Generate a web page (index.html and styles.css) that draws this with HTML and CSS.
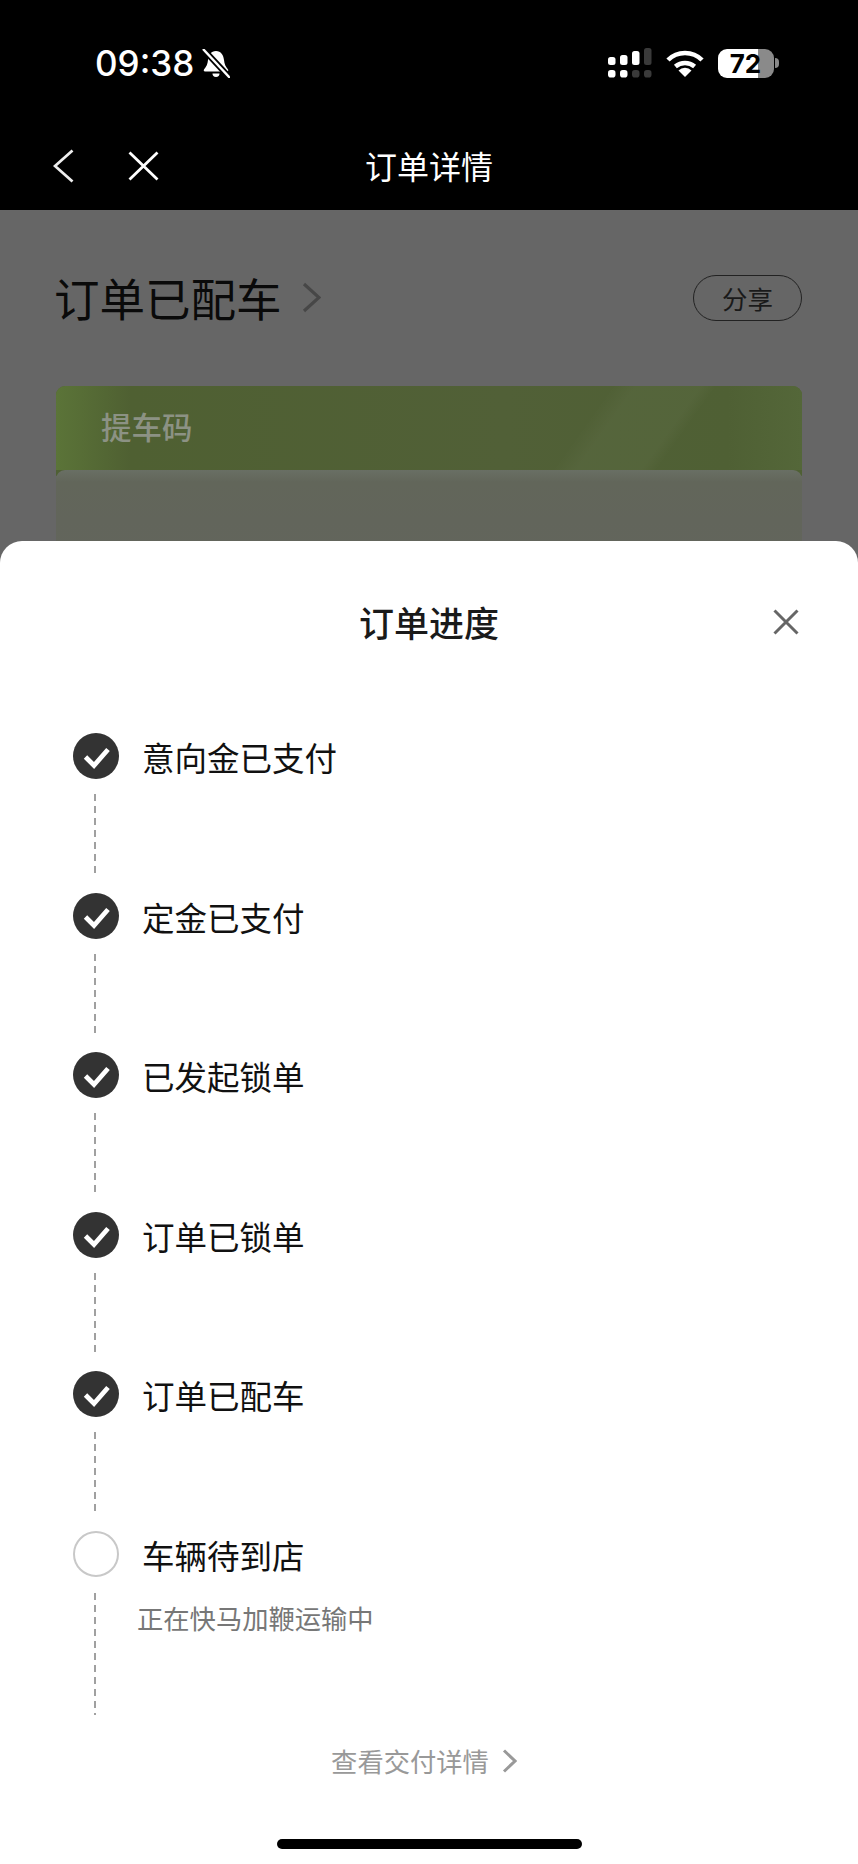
FILE: index.html
```html
<!DOCTYPE html>
<html lang="zh-CN">
<head>
<meta charset="utf-8">
<title>订单进度</title>
<link rel="stylesheet" href="styles.css">
</head>
<body>
<div class="page">
  <header class="top">
    <div class="status">
      <div class="status-left">
        <span class="time">09:38</span>
        <svg class="bell" viewBox="0 0 28 29"><path d="M14 2c5 0 7.500 4 8 9 .4 4 1.500 6.500 4 9.500.6 1 0 2-1 2H3c-1 0-1.600-1-1-2 2.500-3 3.600-5.500 4-9.500.5-5 3-9 8-9z" fill="#fff"/><path d="M10.500 24.500h7a3.500 3.500 0 0 1-7 0z" fill="#fff"/><path d="M1 0l27 29" stroke="#000" stroke-width="6"/><path d="M1 0l27 29" stroke="#fff" stroke-width="2.400"/></svg>
      </div>
      <div class="status-right">
        <svg class="signal" viewBox="0 0 44 30">
          <g fill="#fff">
            <rect x="0" y="9" width="7.500" height="8" rx="2.500"/><rect x="12" y="7" width="7.500" height="10" rx="2.500"/><rect x="24" y="3" width="7.500" height="14" rx="2.500"/>
            <rect x="0" y="22" width="7.500" height="7.500" rx="2.800"/><rect x="12" y="22" width="7.500" height="7.500" rx="2.800"/>
          </g>
          <g fill="#3a3a3a">
            <rect x="36" y="0" width="7.500" height="17" rx="2.500"/><rect x="24" y="22" width="7.500" height="7.500" rx="2.800"/><rect x="36" y="22" width="7.500" height="7.500" rx="2.800"/>
          </g>
        </svg>
        <svg class="wifi" viewBox="0 0 38 27"><path d="M2 10A24 24 0 0 1 36 10M9.400 16.400A15 15 0 0 1 28.600 16.400" fill="none" stroke="#fff" stroke-width="4.600"/><path d="M19 27l-6.500-6.500A9.200 9.200 0 0 1 25.500 20.500z" fill="#fff"/></svg>
        <div class="battery"><span class="battery-level">72</span></div>
        <span class="battery-nub"></span>
      </div>
    </div>
    <nav class="nav">
      <div class="nav-icons">
        <svg class="nav-back" viewBox="0 0 21 34"><path d="M19.500 1.500L2 17l17.500 15.500" fill="none" stroke="#eee" stroke-width="2.800"/></svg>
        <svg class="nav-close" viewBox="0 0 31 30"><path d="M1.500 1.500l28 27M29.500 1.500l-28 27" fill="none" stroke="#fff" stroke-width="2.800"/></svg>
      </div>
      <h1 class="nav-title">订单详情</h1>
      <span></span>
    </nav>
  </header>

  <section class="behind">
    <div class="behind-head">
      <div class="behind-title">
        <span class="behind-text">订单已配车</span>
        <svg class="behind-chevron" viewBox="0 0 19 31"><path d="M2 2l15 13.500L2 29" fill="none" stroke="#474747" stroke-width="3.200"/></svg>
      </div>
      <span class="share">分享</span>
    </div>
    <div class="code-card">
      <div class="code-label">提车码</div>
      <div class="code-panel"></div>
    </div>
  </section>

  <section class="sheet">
    <div class="sheet-head">
      <span></span>
      <h2 class="sheet-title">订单进度</h2>
      <svg class="sheet-close" viewBox="0 0 26 26"><path d="M1.500 1.500l23 23M24.500 1.500l-23 23" fill="none" stroke="#666" stroke-width="3"/></svg>
    </div>

    <ol class="steps">
      <li class="step">
        <div class="step-head"><svg class="dot" viewBox="0 0 46 46"><circle cx="23" cy="23" r="23" fill="#333"/><path d="M12.500 24l8.500 8.500 14-16" fill="none" stroke="#fff" stroke-width="4.800"/></svg><span class="step-label">意向金已支付</span></div>
        <div class="dash"></div>
      </li>
      <li class="step">
        <div class="step-head"><svg class="dot" viewBox="0 0 46 46"><circle cx="23" cy="23" r="23" fill="#333"/><path d="M12.500 24l8.500 8.500 14-16" fill="none" stroke="#fff" stroke-width="4.800"/></svg><span class="step-label">定金已支付</span></div>
        <div class="dash"></div>
      </li>
      <li class="step">
        <div class="step-head"><svg class="dot" viewBox="0 0 46 46"><circle cx="23" cy="23" r="23" fill="#333"/><path d="M12.500 24l8.500 8.500 14-16" fill="none" stroke="#fff" stroke-width="4.800"/></svg><span class="step-label">已发起锁单</span></div>
        <div class="dash"></div>
      </li>
      <li class="step">
        <div class="step-head"><svg class="dot" viewBox="0 0 46 46"><circle cx="23" cy="23" r="23" fill="#333"/><path d="M12.500 24l8.500 8.500 14-16" fill="none" stroke="#fff" stroke-width="4.800"/></svg><span class="step-label">订单已锁单</span></div>
        <div class="dash"></div>
      </li>
      <li class="step">
        <div class="step-head"><svg class="dot" viewBox="0 0 46 46"><circle cx="23" cy="23" r="23" fill="#333"/><path d="M12.500 24l8.500 8.500 14-16" fill="none" stroke="#fff" stroke-width="4.800"/></svg><span class="step-label">订单已配车</span></div>
        <div class="dash"></div>
      </li>
      <li class="step step-last">
        <div class="step-head"><svg class="dot" viewBox="0 0 46 46"><circle cx="23" cy="23" r="22" fill="#fff" stroke="#c8c8c8" stroke-width="2"/></svg><span class="step-label">车辆待到店</span></div>
        <div class="step-body">
          <div class="dash dash-long"></div>
          <p class="step-note">正在快马加鞭运输中</p>
        </div>
      </li>
    </ol>

    <div class="details">
      <span>查看交付详情</span>
      <svg class="details-chevron" viewBox="0 0 15 24"><path d="M2 1.500L13 12 2 22.500" fill="none" stroke="#999" stroke-width="3"/></svg>
    </div>
    <div class="home-bar"></div>
  </section>
</div>
</body>
</html>
```

FILE: styles.css
```css
* { box-sizing: border-box; }
html, body { margin: 0; padding: 0; }
body {
  background: #fff;
  font-family: "Noto Sans CJK SC", "Noto Sans", sans-serif;
}
h1, h2, p, ol { margin: 0; padding: 0; }
ol { list-style: none; }
svg { display: block; flex: none; }

.page { width: 858px; height: 1864px; overflow: hidden; display: flex; flex-direction: column; }

/* Header */
.top { height: 210px; background: #000; color: #fff; }
.status {
  height: 126px;
  padding: 0 79px 0 96px;
  display: flex;
  align-items: center;
  justify-content: space-between;
}
.status-left { display: flex; align-items: center; gap: 8px; }
.time { font-family: Inter, sans-serif; font-size: 35px; font-weight: 500; line-height: 34px; margin-left: -1px; }
.bell { width: 28px; height: 29px; }
.status-right { display: flex; align-items: center; }
.signal { width: 44px; height: 30px; margin-right: 14px; }
.wifi { width: 38px; height: 27px; margin-right: 14px; }
.battery {
  width: 56px;
  height: 29px;
  border-radius: 9px;
  background: linear-gradient(90deg, #fff 0 71.5%, #8a8a8a 71.5% 100%);
  display: flex;
  align-items: center;
  justify-content: center;
}
.battery-level {
  font-family: Inter, sans-serif;
  font-size: 26px;
  font-weight: 700;
  line-height: 29px;
  color: #000;
  margin-left: -1px;
}
.battery-nub {
  width: 4px;
  height: 10px;
  margin-left: 1px;
  background: #8a8a8a;
  border-radius: 0 4px 4px 0;
}
.nav {
  height: 80px;
  padding: 0 53px;
  display: grid;
  grid-template-columns: 1fr auto 1fr;
  align-items: center;
}
.nav-icons { display: flex; align-items: center; gap: 54px; }
.nav-back { width: 21px; height: 34px; }
.nav-close { width: 31px; height: 30px; }
.nav-title { font-size: 32px; font-weight: 400; line-height: 46px; padding-bottom: 2px; color: #fff; }

/* Dimmed page behind the sheet */
.behind { height: 353px; background: #666; padding: 65px 56px 0; overflow: hidden; }
.behind-head { height: 46px; display: flex; align-items: center; justify-content: space-between; }
.behind-title {
  display: flex;
  align-items: center;
  gap: 20px;
  font-size: 45.500px;
  font-weight: 400;
  line-height: 46px;
  color: #0a0a0a;
}
.behind-text { padding-bottom: 3px; margin-left: -2px; }
.behind-chevron { width: 19px; height: 31px; margin-top: -2px; }
.share {
  width: 109px;
  height: 46px;
  border: 1.500px solid #222;
  border-radius: 23px;
  font-size: 25.500px;
  line-height: 43px;
  text-align: center;
  color: #1a1a1a;
}
.code-card {
  margin-top: 65px;
  height: 212px;
  border-radius: 9px 9px 0 0;
  background: linear-gradient(180deg, #4f6034 0 90px, transparent 90px);
  overflow: hidden;
}
.code-label {
  height: 84px;
  padding: 18px 0 0 45px;
  font-size: 30.500px;
  font-weight: 500;
  line-height: 44px;
  color: #8c9284;
  background:
    linear-gradient(125.500deg, transparent 69%, rgba(255,255,255,.03) 72%, rgba(255,255,255,.03) 80%, transparent 82%),
    linear-gradient(90deg, #5b7438 0%, #4f6032 10%, #516037 60%, #4f6034 90%, #546739 100%);
}
.code-panel {
  height: 128px;
  border-radius: 9px 9px 0 0;
  background: linear-gradient(180deg, #696f64 0, #62665a 12px, #62655b 50px, #63655d 100%);
}

/* Bottom sheet */
.sheet {
  flex: 1;
  margin-top: -22px;
  padding-top: 58px;
  background: #fff;
  border-radius: 22px 22px 0 0;
  position: relative;
}
.sheet-head {
  padding: 0 59px 0 61px;
  height: 46px;
  display: grid;
  grid-template-columns: 1fr auto 1fr;
  align-items: center;
}
.sheet-title { font-size: 35px; font-weight: 500; line-height: 46px; color: #1a1a1a; margin-left: -2px; }
.sheet-close { width: 26px; height: 26px; justify-self: end; }

.steps { margin-top: 88px; padding-left: 73px; }
.step { height: 159.500px; }
.step-last { height: auto; }
.step-head { display: flex; align-items: center; height: 46px; }
.dot { width: 46px; height: 46px; }
.step-label {
  margin-left: 23px;
  padding-top: 2px;
  font-size: 32.500px;
  line-height: 46px;
  color: #111;
}
.dash {
  width: 2px;
  height: 83px;
  margin: 15px 0 0 21px;
  background: repeating-linear-gradient(180deg, #a0a0a0 0 7px, transparent 7px 12px);
}
.dash-long { height: 122px; margin-top: 0; flex: none; }
.step-body { display: flex; margin-top: 16px; }
.step-note {
  margin: 7px 0 0 41px;
  font-size: 26.300px;
  line-height: 36px;
  color: #777;
}

.details {
  margin-top: 28px;
  height: 36px;
  padding-right: 10px;
  display: flex;
  align-items: center;
  justify-content: center;
  gap: 13px;
  font-size: 26.300px;
  line-height: 36px;
  color: #999;
}
.details-chevron { width: 15px; height: 24px; }
.home-bar {
  width: 305px;
  height: 10px;
  margin: 60px 0 0 277px;
  background: #000;
  border-radius: 5px;
}
```
